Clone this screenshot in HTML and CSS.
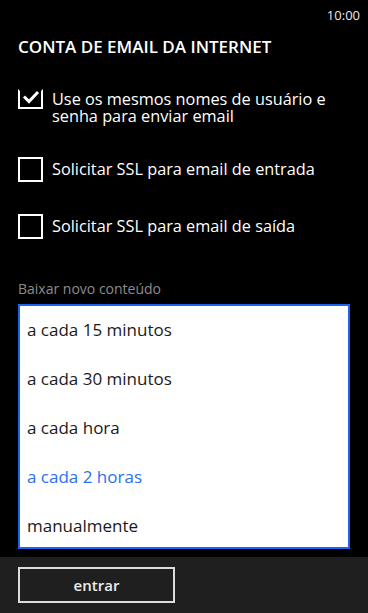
FILE: index.html
```html
<!DOCTYPE html>
<html lang="pt">
<head>
    <meta charset="UTF-8">
    <title>Conta de email da internet</title>
    <link rel="stylesheet" href="styles.css">
</head>
<body>
    <div class="phone">
        <div class="status">10:00</div>

        <main class="content">
            <h1 class="title">CONTA DE EMAIL DA INTERNET</h1>

            <div class="check-row first">
                <span class="box checked">
                    <svg width="18" height="14" viewBox="0 0 18 14">
                        <path d="M2 6.5 L7 11.5 L16 2" fill="none" stroke="#fff" stroke-width="3"/>
                    </svg>
                </span>
                <span class="check-label">Use os mesmos nomes de usuário e senha para enviar email</span>
            </div>

            <div class="check-row second">
                <span class="box"></span>
                <span class="check-label">Solicitar SSL para email de entrada</span>
            </div>

            <div class="check-row last">
                <span class="box"></span>
                <span class="check-label">Solicitar SSL para email de saída</span>
            </div>

            <div class="field-label">Baixar novo conteúdo</div>
            <ul class="picker">
                <li>a cada 15 minutos</li>
                <li>a cada 30 minutos</li>
                <li>a cada hora</li>
                <li class="selected">a cada 2 horas</li>
                <li>manualmente</li>
            </ul>
        </main>

        <footer class="appbar">
            <button class="btn">entrar</button>
        </footer>
    </div>
</body>
</html>
```

FILE: styles.css
```css
body {
    margin: 0;
    background-color: #000;
    color: #fff;
    font-family: "Open Sans", "Noto Sans", sans-serif;
}

.phone {
    width: 368px;
    height: 613px;
    display: flex;
    flex-direction: column;
    overflow: hidden;
}

.status {
    height: 30px;
    line-height: 30px;
    text-align: right;
    padding-right: 8px;
    font-size: 13px;
    color: #e8e8e8;
}

.content {
    flex: 1;
    padding: 0 18px;
}

.title {
    margin: 6px 0 0;
    font-size: 17px;
    line-height: 22px;
    font-weight: 600;
}

.check-row {
    display: flex;
    align-items: flex-start;
    gap: 9px;
    margin-top: 29px;
    font-size: 16.3px;
    line-height: 17px;
}

.check-row.first {
    margin-top: 31px;
}

.check-row.second {
    margin-top: 34px;
}

.check-row.last {
    margin-top: 34px;
}

.box {
    flex: none;
    width: 21px;
    height: 21px;
    border: 2px solid #fff;
    margin-top: -2px;
    display: flex;
    align-items: center;
    justify-content: center;
}

.box.checked {
    height: 16px;
    border-top-color: transparent;
    margin-top: 0;
}

.box.checked svg {
    margin-top: -4px;
}

.check-label {
    padding-top: 2px;
}

.field-label {
    margin-top: 41px;
    font-size: 14px;
    line-height: 18px;
    color: #8c8c8c;
}

.picker {
    list-style: none;
    margin: 6px 0 0;
    padding: 0;
    background: #fff;
    border: 2px solid #1e63f0;
    height: 241px;
}

.picker li {
    height: 49px;
    line-height: 47px;
    padding-left: 7px;
    font-size: 17px;
    color: #1a1a1a;
}

.picker li.selected {
    color: #2a6ff0;
}

.appbar {
    height: 56px;
    background-color: #1f1f1f;
    padding: 10px 18px 0;
    box-sizing: border-box;
}

.btn {
    width: 157px;
    height: 36px;
    background: transparent;
    border: 2px solid #dcdcdc;
    color: #ececec;
    font-family: "Open Sans", "Noto Sans", sans-serif;
    font-size: 15px;
    font-weight: 600;
    padding: 0;
}
```
